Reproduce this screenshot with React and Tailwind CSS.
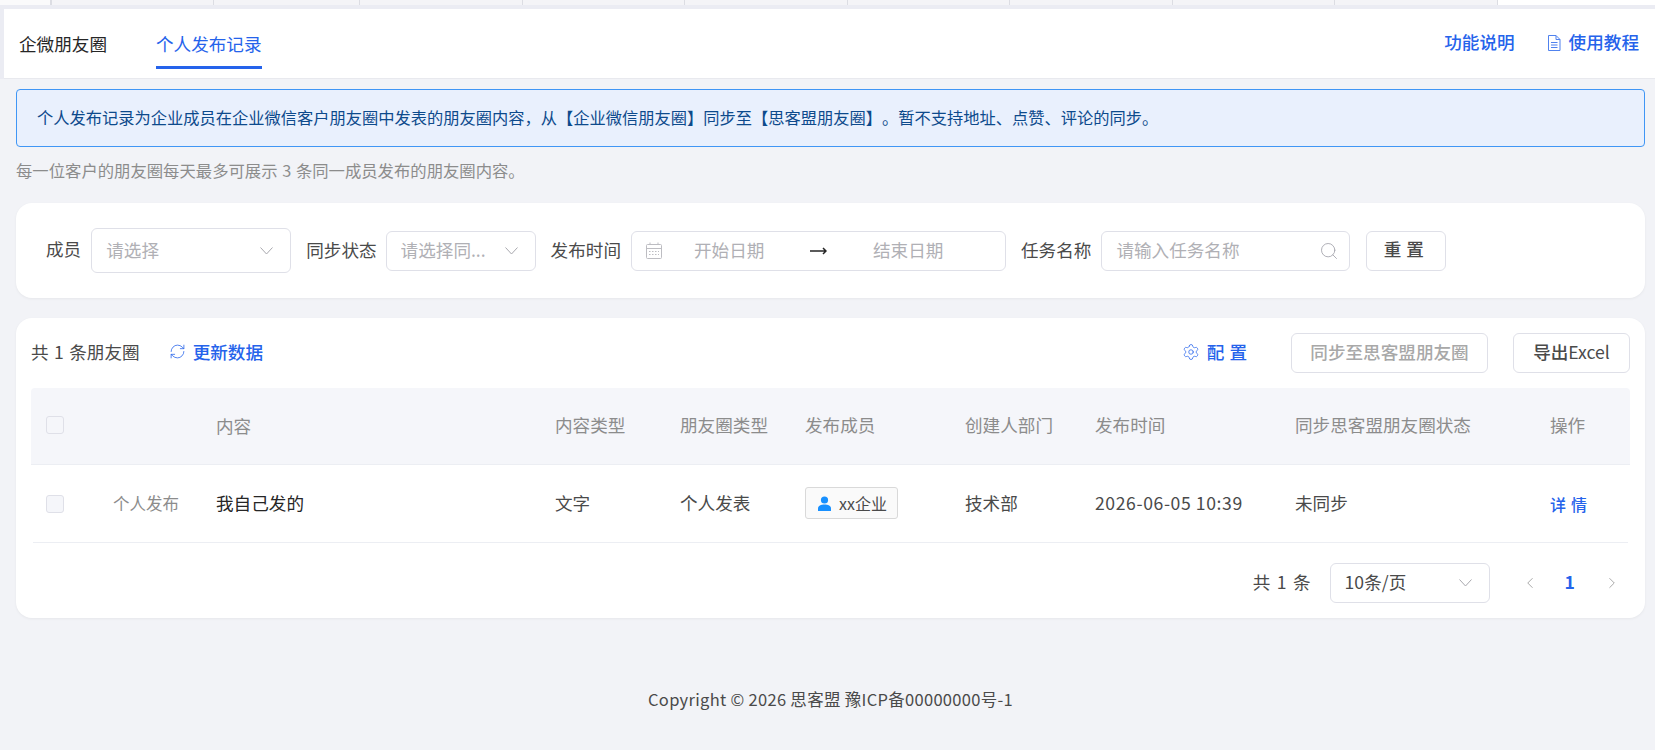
import React from 'react';
import { ChevronLeft, ChevronRight, Search, Settings, RefreshCw } from 'lucide-react';

const columns = ['内容', '内容类型', '朋友圈类型', '发布成员', '创建人部门', '发布时间', '同步思客盟朋友圈状态', '操作'];
const gridCols = 'grid grid-cols-[185px_339px_125px_125px_160px_130px_200px_255px_80px] items-center';
const tabs = [52, 162, 146, 163, 162, 163, 162, 163, 162, 163];

function Chevron() {
  return (
    <svg width="13" height="8" viewBox="0 0 13 8" fill="none" stroke="#a8a8ae" strokeWidth="1" className="shrink-0">
      <path d="M0.5 0.5 L6.5 7 L12.5 0.5" />
    </svg>
  );
}

function CalendarIcon() {
  return (
    <svg width="16" height="17" viewBox="0 0 16 17" fill="none" stroke="#bdbdc2" strokeWidth="1" className="shrink-0">
      <rect x="0.5" y="2.5" width="15" height="14" rx="1" />
      <path d="M0.5 6.5 H15.5 M4 0.5 V3 M12 0.5 V3" />
      <path d="M3 9.5 H13 M3 12.5 H13" strokeDasharray="1.5 1.5" />
    </svg>
  );
}

function DocIcon() {
  return (
    <svg width="14" height="16" viewBox="0 0 14 16" fill="none" stroke="#2563eb" strokeWidth="1" className="shrink-0 mt-[6px] opacity-80">
      <path d="M1.5 0.5 H9 L13 4.5 V15.5 H1.5 Z" />
      <path d="M9 0.5 V4.5 H13 M4 7.5 H10.5 M4 10 H10.5 M4 12.5 H10.5" />
    </svg>
  );
}

function PersonIcon() {
  return (
    <svg width="13" height="15" viewBox="0 0 13 15" fill="#1890ff" className="shrink-0">
      <circle cx="6.5" cy="4" r="3.6" />
      <path d="M0 15 V12.5 C0 9.8 3 8.6 6.5 8.6 S13 9.8 13 12.5 V15 Z" />
    </svg>
  );
}

function Select({ text, className, color = 'text-[#b0b0b5]' }) {
  return (
    <div className={`flex items-center justify-between border border-[#dfe0e8] rounded-md bg-white pl-[14px] pr-[17px] ${className}`}>
      <span className={`truncate ${color}`}>{text}</span>
      <Chevron />
    </div>
  );
}

export default function App() {
  return (
    <div className="h-[750px] overflow-hidden bg-[#f2f3f7] text-[#4a4a4a] font-['Noto_Sans_CJK_SC',sans-serif]">
      {/* top tab strip */}
      <div className="flex h-[5px] bg-[#f3f4f7]">
        {tabs.map((w, i) => (
          <div key={i} style={{ width: w }} className={i === 0 ? 'bg-[#fafafb] border-r-2 border-[#dcdde3]' : 'bg-[#f4f4f7] border-r border-[#dcdde3]'} />
        ))}
        <div className="flex-1 bg-white" />
      </div>

      <div className="bg-[#ebecf3] pt-[4px] pl-[4px]">
        <div className="h-[70px] bg-white border-b border-[#e8e9ee] flex justify-between pl-[15px] pr-[16px]">
          <div className="flex gap-[49px] text-[17.6px]">
            <div className="pt-[22px] text-[#262626]">企微朋友圈</div>
            <div className="pt-[22px] w-[106px] h-[60px] text-[#2563eb] border-b-[3px] border-[#2563eb] whitespace-nowrap">个人发布记录</div>
          </div>
          <div className="flex gap-[32px] text-[17.6px] font-medium text-[#2563eb] pt-[20px]">
            <span>功能说明</span>
            <span className="flex items-start gap-[8px]">
              <DocIcon />
              使用教程
            </span>
          </div>
        </div>
      </div>

      <div className="pl-[16px] pr-[10px]">
        <div className="mt-[10px] h-[58px] pb-[1px] flex items-center pl-[20px] border border-[#4096f5] rounded-[4px] bg-[#e9f0fd] text-[#0d4a8c] text-[16.25px] [text-spacing-trim:space-all]">
          个人发布记录为企业成员在企业微信客户朋友圈中发表的朋友圈内容，从【企业微信朋友圈】同步至【思客盟朋友圈】。暂不支持地址、点赞、评论的同步。
        </div>
        <div className="mt-[11px] text-[16.35px] text-[#8c8c8c] leading-[24px] [word-spacing:1px]">每一位客户的朋友圈每天最多可展示 3 条同一成员发布的朋友圈内容。</div>

        {/* filters */}
        <div className="mt-[21px] h-[95px] bg-white rounded-2xl shadow-[0_1px_3px_rgba(0,0,0,0.05)] flex items-center pl-[30px] text-[17.6px]">
          <span className="mr-[10px] -mt-[3px]">成员</span>
          <Select text="请选择" className="w-[200px] h-[45px] mr-[15px]" />
          <span className="mr-[9px]">同步状态</span>
          <Select text="请选择同..." className="w-[150px] h-[40px] mr-[15px]" />
          <span className="mr-[10px]">发布时间</span>
          <div className="w-[375px] h-[40px] mr-[15px] flex items-center border border-[#dfe0e8] rounded-md pl-[14px] text-[#b0b0b5] whitespace-nowrap">
            <CalendarIcon />
            <span className="ml-[32px] w-[71px]">开始日期</span>
            <svg width="17" height="8" viewBox="0 0 17 8" fill="none" stroke="#262626" strokeWidth="1.5" className="ml-[45px] shrink-0">
              <path d="M0 4 H16 M13 1 L16 4 L13 7" />
            </svg>
            <span className="ml-[46px] w-[71px]">结束日期</span>
          </div>
          <span className="mr-[10px]">任务名称</span>
          <div className="w-[249px] h-[40px] mr-[16px] flex items-center justify-between border border-[#dfe0e8] rounded-md pl-[14px] pr-[10px] text-[#b0b0b5]">
            请输入任务名称
            <Search size={20} strokeWidth={1} className="text-[#a0a0a8]" />
          </div>
          <button className="w-[80px] h-[40px] pb-[2px] border border-[#dfe0e8] rounded-md text-[17.6px] font-medium tracking-[5px]">重置</button>
        </div>

        {/* table */}
        <div className="mt-[20px] h-[300px] bg-white rounded-2xl shadow-[0_1px_3px_rgba(0,0,0,0.05)] px-[15px]">
          <div className="h-[70px] flex items-center text-[17.6px]">
            <span className="-mt-[2px] [word-spacing:1.5px]">共 1 条朋友圈</span>
            <span className="ml-[29px] -mt-[2px] flex items-center gap-[7px] text-[#2563eb] font-medium">
              <RefreshCw size={17} strokeWidth={1.1} />
              更新数据
            </span>
            <span className="ml-auto -mt-[2px] flex items-center gap-[7px] text-[#2563eb] font-medium">
              <Settings size={18} strokeWidth={1} />
              <span className="tracking-[5px]">配置</span>
            </span>
            <button className="ml-[39px] w-[197px] h-[40px] pb-[2px] border border-[#dfe0e8] rounded-md text-[#a8a8a8] font-medium">同步至思客盟朋友圈</button>
            <button className="ml-[25px] w-[117px] h-[40px] pb-[2px] border border-[#dfe0e8] rounded-md font-medium">导出<span className="font-normal">Excel</span></button>
          </div>

          <div className={`${gridCols} h-[77px] bg-[#f5f6fa] border-b border-[#eceef3] text-[#8c8c8c] text-[17.6px] rounded-t-[4px]`}>
            <div className="pl-[15px]"><div className="w-[18px] h-[18px] border border-[#dfe0e8] rounded-[3px] -mt-[3px]" /></div>
            {columns.map((c) => <div key={c} className={c === '内容' ? 'pt-[1px]' : '-mt-[2px]'}>{c}</div>)}
          </div>
          <div className={`${gridCols} h-[77px] text-[17.6px]`}>
            <div className="pl-[15px] flex items-center justify-between pr-[37px]">
              <div className="w-[18px] h-[18px] border border-[#dfe0e8] bg-[#f5f6fa] rounded-[3px]" />
              <span className="text-[16.5px] text-[#8c8c8c]">个人发布</span>
            </div>
            <div className="text-[#262626]">我自己发的</div>
            <div>文字</div>
            <div>个人发表</div>
            <div>
              <span className="w-[93px] h-[32px] -mt-[1px] flex items-center gap-[8px] pl-[12px] border border-[#d9d9d9] bg-[#fafafa] rounded-[3px] text-[16px]">
                <PersonIcon />
                xx企业
              </span>
            </div>
            <div>技术部</div>
            <div className="whitespace-nowrap tracking-[0.6px]">2026-06-05 10:39</div>
            <div>未同步</div>
            <div className="text-[#2563eb] font-medium text-[16px] tracking-[5px]">详情</div>
          </div>
          <div className="mx-[2px] h-px bg-[#eceef3]" />

          <div className="h-[79px] flex items-center justify-end text-[17.6px] pr-[9px]">
            <span className="[word-spacing:2.5px]">共 1 条</span>
            <Select text="10条/页" color="text-[#4a4a4a]" className="w-[160px] h-[40px] ml-[19px]" />
            <ChevronLeft size={18} strokeWidth={1} className="ml-[31px] text-[#8c8c8c]" />
            <span className="ml-[26px] font-semibold text-[#2563eb]">1</span>
            <ChevronRight size={18} strokeWidth={1} className="ml-[28px] text-[#8c8c8c]" />
          </div>
        </div>

        <div className="mt-[69px] text-center text-[16.5px] leading-[24px] tracking-[0.3px]">Copyright © 2026 思客盟 豫ICP备00000000号-1</div>
      </div>
    </div>
  );
}
